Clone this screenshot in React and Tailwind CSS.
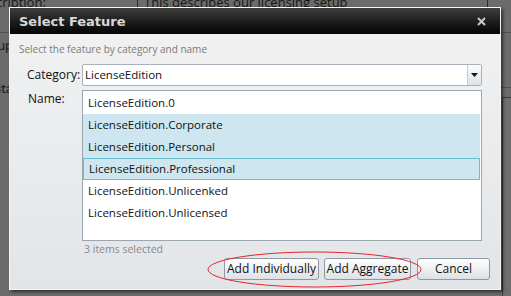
export default function App() {
  const items = [
    { t: "LicenseEdition.0", sel: false, focus: false },
    { t: "LicenseEdition.Corporate", sel: true, focus: false },
    { t: "LicenseEdition.Personal", sel: true, focus: false },
    { t: "LicenseEdition.Professional", sel: true, focus: true },
    { t: "LicenseEdition.Unlicenked", sel: false, focus: false },
    { t: "LicenseEdition.Unlicensed", sel: false, focus: false },
  ];
  const ui = { fontFamily: '"Open Sans", "Liberation Sans", sans-serif' };
  return (
    <div className="relative w-[511px] h-[296px] overflow-hidden bg-[#6b6b6b]" style={ui}>
      {/* dimmed page behind the dialog */}
      <div className="flex flex-col text-[13px] text-[#161616]">
        <div className="flex h-[33px] border-b border-[#505050]">
          <div className="w-[137px] h-[8px] overflow-hidden shrink-0">
            <div className="-mt-[5px] -ml-[27px] leading-[14px] whitespace-nowrap">Description:</div>
          </div>
          <div className="w-[351px] h-[8px] overflow-hidden border-x border-[#2a2a2a] pl-[6px] shrink-0">
            <div className="-mt-[5px] leading-[14px] whitespace-nowrap">This describes our licensing setup</div>
          </div>
        </div>
        <div className="flex h-[55px] border-b border-[#505050] pt-[4px]">
          <div className="-ml-[10px] leading-[16px]">Supported:</div>
        </div>
        <div className="flex h-[40px] -mt-[8px]">
          <div className="-ml-[6px] leading-[16px]">Status:</div>
        </div>
      </div>
      <div className="absolute right-0 top-[97px] w-[9px] h-[199px] border-l border-t border-[#3c3c3c] bg-[#6e6e6e]" />

      {/* dialog */}
      <div className="absolute left-[9px] top-[7px] w-[492px] h-[283px] border border-[#f4f6f8] shadow-[2px_2px_3px_rgba(0,0,0,0.55)] flex flex-col bg-gradient-to-b from-[#f2f2f2] to-[#e2e5e8]">
        <div className="h-[26px] shrink-0 flex items-center justify-between pl-[9px] pr-[14px] bg-gradient-to-b from-[#3e3e3e] to-[#050505]">
          <span className="text-[#d9d9d9] font-bold text-[13px] leading-none" style={{ fontFamily: '"DejaVu Sans", Verdana, sans-serif' }}>
            Select Feature
          </span>
          <svg width="9" height="9" viewBox="0 0 9 9" className="mt-[1px]">
            <path d="M1 1 L8 8 M8 1 L1 8" stroke="#c9c9c9" strokeWidth="2" />
          </svg>
        </div>
        <div className="flex-1 flex flex-col pl-[9px] pr-[10px]">
          <div className="h-[30px] flex items-center text-[10px] text-[#7a7a7a] pt-[1px]">
            Select the feature by category and name
          </div>
          <div className="flex items-center pl-[8px] pr-[8px]">
            <div className="w-[55px] text-[12px] text-[#111]">Category:</div>
            <div className="flex-1 h-[22px] border border-[#a9b2bb] rounded-[2px] bg-white flex items-stretch">
              <div className="flex-1 flex items-center pl-[2px] text-[11.5px] text-[#111]">LicenseEdition</div>
              <div className="w-[14px] border-l border-[#c4cad0] bg-gradient-to-b from-[#fbfbfb] to-[#dde3e8] flex items-center justify-center">
                <svg width="7" height="4" viewBox="0 0 7 4">
                  <path d="M0 0 L7 0 L3.5 4 Z" fill="#111" />
                </svg>
              </div>
            </div>
          </div>
          <div className="flex items-start pl-[8px] pr-[8px] mt-[4px]">
            <div className="w-[55px] text-[12px] text-[#111] leading-[16px] pt-[1px] pl-[1px]">Name:</div>
            <div className="flex-1 h-[151px] border border-[#9ba5ae] bg-white pt-[1px] pr-[1px]">
              {items.map((it) => (
                <div
                  key={it.t}
                  className={
                    "h-[22px] flex items-center pl-[5px] text-[11.5px] text-[#111] " +
                    (it.sel ? "bg-[#cde6f0] " : "") +
                    (it.focus ? "border border-[#6cbfcf] pl-[4px]" : "")
                  }
                >
                  {it.t}
                </div>
              ))}
            </div>
          </div>
          <div className="pl-[65px] text-[10.5px] text-[#8a8a8a] h-[18px] flex items-center">3 items selected</div>
          <div className="flex justify-end gap-[5px] mt-[-1px]">
            <button className="w-[95px] h-[22px] border border-[#8d9aa6] rounded-[3px] bg-gradient-to-b from-[#ffffff] to-[#dde1e5] text-[12px] text-[#111]">
              Add Individually
            </button>
            <button className="w-[87px] h-[22px] border border-[#8d9aa6] rounded-[3px] bg-gradient-to-b from-[#ffffff] to-[#dde1e5] text-[12px] text-[#111]">
              Add Aggregate
            </button>
            <button className="w-[73px] h-[22px] ml-[1px] border border-[#8d9aa6] rounded-[3px] bg-gradient-to-b from-[#ffffff] to-[#dde1e5] text-[12px] text-[#111]">
              Cancel
            </button>
          </div>
        </div>
      </div>

      {/* red annotation ellipse */}
      <svg className="absolute left-0 top-0 pointer-events-none" width="511" height="296">
        <ellipse cx="314.5" cy="269.5" rx="106.5" ry="17.5" fill="none" stroke="#e8222a" strokeWidth="1" />
      </svg>
    </div>
  );
}
